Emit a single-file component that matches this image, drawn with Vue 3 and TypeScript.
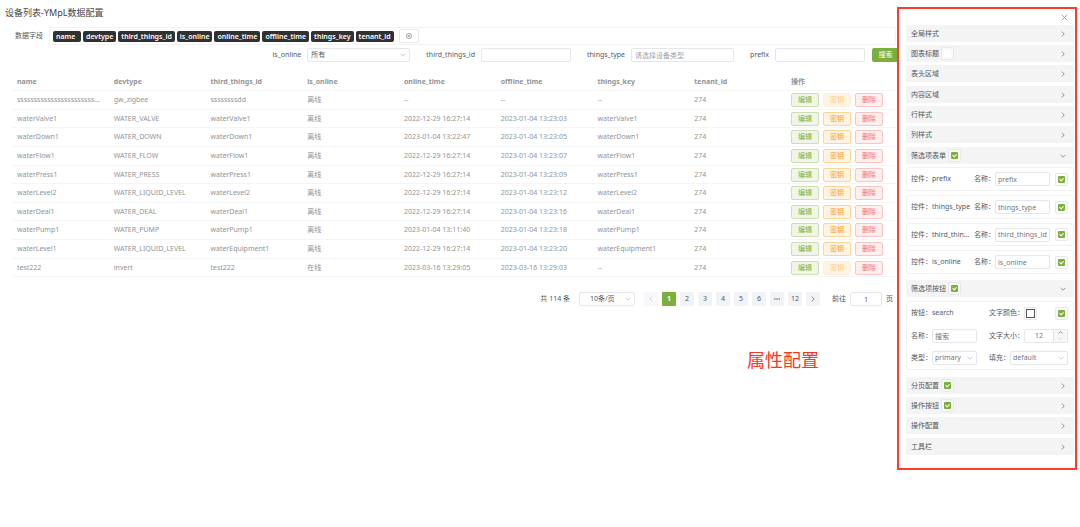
<script setup lang="ts">
import { reactive, ref } from 'vue'

interface Device {
  name: string
  devtype: string
  third: string
  online: string
  onlineTime: string
  offlineTime: string
  key: string
  tenant: string
}

const tags = ['name', 'devtype', 'third_things_id', 'is_online', 'online_time', 'offline_time', 'things_key', 'tenant_id']

const row = (name: string, devtype: string, third: string, onlineTime: string, offlineTime: string, key = third, online = '离线'): Device => ({
  name, devtype, third, online, onlineTime, offlineTime, key, tenant: '274',
})

const devices: Device[] = [
  row('ssssssssssssssssssssssssssssssss', 'gw_zigbee', 'ssssssssdd', '--', '--', '--'),
  row('waterValve1', 'WATER_VALVE', 'waterValve1', '2022-12-29 16:27:14', '2023-01-04 13:23:03'),
  row('waterDown1', 'WATER_DOWN', 'waterDown1', '2023-01-04 13:22:47', '2023-01-04 13:23:05'),
  row('waterFlow1', 'WATER_FLOW', 'waterFlow1', '2022-12-29 16:27:14', '2023-01-04 13:23:07'),
  row('waterPress1', 'WATER_PRESS', 'waterPress1', '2022-12-29 16:27:14', '2023-01-04 13:23:09'),
  row('waterLevel2', 'WATER_LIQUID_LEVEL', 'waterLevel2', '2022-12-29 16:27:14', '2023-01-04 13:23:12'),
  row('waterDeal1', 'WATER_DEAL', 'waterDeal1', '2022-12-29 16:27:14', '2023-01-04 13:23:16'),
  row('waterPump1', 'WATER_PUMP', 'waterPump1', '2023-01-04 13:11:40', '2023-01-04 13:23:18'),
  row('waterLevel1', 'WATER_LIQUID_LEVEL', 'waterEquipment1', '2022-12-29 16:27:14', '2023-01-04 13:23:20'),
  row('test222', 'invert', 'test222', '2023-03-16 13:29:05', '2023-03-16 13:29:03', '--', '在线'),
]

const firstPages = ['1', '2', '3', '4', '5', '6']
const currentPage = ref('1')

const topSections = reactive([
  { title: '全局样式' },
  { title: '图表标题', checked: false },
  { title: '表头区域' },
  { title: '内容区域' },
  { title: '行样式' },
  { title: '列样式' },
  { title: '筛选项表单', checked: true, open: true },
] as { title: string; checked?: boolean; open?: boolean }[])

const controls = reactive([
  { id: 'prefix', label: 'prefix', enabled: true },
  { id: 'things_type', label: 'things_type', enabled: true },
  { id: 'third_things_id', label: 'third_things_id', enabled: true },
  { id: 'is_online', label: 'is_online', enabled: true },
])

const bottomSections = reactive([
  { title: '分页配置', checked: true },
  { title: '操作按钮', checked: true },
  { title: '操作配置' },
  { title: '工具栏' },
] as { title: string; checked?: boolean }[])

const buttonSection = ref(true)
const searchEnabled = ref(true)
const fontSize = ref(12)
const buttonName = ref('搜索')
</script>

<template>
  <div class="page">
    <main class="main">
      <h1 class="title">设备列表-YMpL数据配置</h1>

      <div class="fields">
        <span class="fields-label">数据字段</span>
        <div class="tag-list">
          <span v-for="t in tags" :key="t" class="tag">{{ t }}</span>
          <button class="add" type="button" aria-label="字段设置">
            <svg viewBox="0 0 14 14"><circle cx="7" cy="7" r="6" /><circle cx="7" cy="7" r="2" /></svg>
          </button>
        </div>
      </div>

      <form class="filters" @submit.prevent>
        <label class="field">
          <span>is_online</span>
          <span class="select wide">
            <select><option>所有</option></select>
            <svg viewBox="0 0 10 10"><path d="M1 3l4 4 4-4" /></svg>
          </span>
        </label>
        <label class="field"><span>third_things_id</span><input class="box" type="text" /></label>
        <label class="field"><span>things_type</span><input class="box wide" type="text" placeholder="请选择设备类型" /></label>
        <label class="field"><span>prefix</span><input class="box" type="text" /></label>
        <button class="search" type="submit">搜索</button>
      </form>

      <table class="table">
        <colgroup><col v-for="n in 8" :key="n" /><col class="ops-col" /></colgroup>
        <thead>
          <tr>
            <th v-for="t in tags" :key="t">{{ t }}</th>
            <th>操作</th>
          </tr>
        </thead>
        <tbody>
          <tr v-for="d in devices" :key="d.name">
            <td>{{ d.name }}</td>
            <td>{{ d.devtype }}</td>
            <td>{{ d.third }}</td>
            <td>{{ d.online }}</td>
            <td>{{ d.onlineTime }}</td>
            <td>{{ d.offlineTime }}</td>
            <td>{{ d.key }}</td>
            <td>{{ d.tenant }}</td>
            <td>
              <div class="ops">
                <button type="button" class="op edit">编辑</button>
                <button type="button" class="op secret" :disabled="d.key === '--'">密钥</button>
                <button type="button" class="op remove">删除</button>
              </div>
            </td>
          </tr>
        </tbody>
      </table>

      <nav class="pager">
        <span class="total">共 114 条</span>
        <span class="select size">
          <select aria-label="每页条数"><option>10条/页</option></select>
          <svg viewBox="0 0 10 10"><path d="M1 3l4 4 4-4" /></svg>
        </span>
        <div class="pages">
          <button type="button" disabled aria-label="上一页"><svg viewBox="0 0 10 10"><path d="M7 1L3 5l4 4" /></svg></button>
          <button
            v-for="p in firstPages"
            :key="p"
            type="button"
            :class="{ active: p === currentPage }"
            @click="currentPage = p"
          >{{ p }}</button>
          <button type="button" aria-label="更多页">
            <svg class="dots" viewBox="0 0 14 14"><circle cx="2" cy="7" r="1.6" /><circle cx="7" cy="7" r="1.6" /><circle cx="12" cy="7" r="1.6" /></svg>
          </button>
          <button type="button" :class="{ active: currentPage === '12' }" @click="currentPage = '12'">12</button>
          <button type="button" aria-label="下一页"><svg viewBox="0 0 10 10"><path d="M3 1l4 4-4 4" /></svg></button>
        </div>
        <label class="jump"><span>前往</span><input type="text" value="1" /><span>页</span></label>
      </nav>

      <p class="note">属性配置</p>
    </main>

    <aside class="panel">
      <div class="panel-top">
        <button class="close" type="button" aria-label="关闭"><svg viewBox="0 0 10 10"><path d="M1 1l8 8M9 1L1 9" /></svg></button>
      </div>

      <div class="sections">
        <div v-for="s in topSections" :key="s.title" class="bar">
          <span>{{ s.title }}</span>
          <label v-if="s.checked !== undefined" class="tick"><input v-model="s.checked" type="checkbox" :aria-label="s.title" /></label>
          <svg class="arrow" viewBox="0 0 10 10"><path :d="s.open ? 'M1 3l4 4 4-4' : 'M3 1l4 4-4 4'" /></svg>
        </div>
      </div>

      <div class="cards">
        <div v-for="c in controls" :key="c.id" class="card control">
          <span class="key">控件：</span>
          <span class="value">{{ c.id }}</span>
          <label class="named"><span class="key">名称：</span><input v-model="c.label" class="text" type="text" /></label>
          <label class="tick"><input v-model="c.enabled" type="checkbox" :aria-label="c.id" /></label>
        </div>
      </div>

      <div class="bar">
        <span>筛选项按钮</span>
        <label class="tick"><input v-model="buttonSection" type="checkbox" aria-label="筛选项按钮" /></label>
        <svg class="arrow" viewBox="0 0 10 10"><path d="M1 3l4 4 4-4" /></svg>
      </div>

      <div class="card settings">
        <div class="pair"><span class="key">按钮：</span><span>search</span></div>
        <div class="pair">
          <span class="key">文字颜色：</span>
          <button class="swatch" type="button" aria-label="文字颜色"><i></i></button>
          <label class="tick end"><input v-model="searchEnabled" type="checkbox" aria-label="search" /></label>
        </div>

        <label class="pair"><span class="key">名称：</span><input v-model="buttonName" class="text" type="text" /></label>
        <div class="pair">
          <label class="key" for="font-size">文字大小：</label>
          <div class="stepper">
            <input id="font-size" v-model="fontSize" type="text" />
            <div class="steps">
              <button type="button" aria-label="增加" @click="fontSize++"><svg viewBox="0 0 10 10"><path d="M1 7l4-4 4 4" /></svg></button>
              <button type="button" class="faded" aria-label="减少" @click="fontSize--"><svg viewBox="0 0 10 10"><path d="M1 3l4 4 4-4" /></svg></button>
            </div>
          </div>
        </div>

        <label class="pair">
          <span class="key">类型：</span>
          <span class="select grow">
            <select><option>primary</option></select>
            <svg viewBox="0 0 10 10"><path d="M1 3l4 4 4-4" /></svg>
          </span>
        </label>
        <label class="pair">
          <span class="key">填充：</span>
          <span class="select grow">
            <select><option>default</option></select>
            <svg viewBox="0 0 10 10"><path d="M1 3l4 4 4-4" /></svg>
          </span>
        </label>
      </div>

      <div class="sections">
        <div v-for="s in bottomSections" :key="s.title" class="bar">
          <span>{{ s.title }}</span>
          <label v-if="s.checked !== undefined" class="tick"><input v-model="s.checked" type="checkbox" :aria-label="s.title" /></label>
          <svg class="arrow" viewBox="0 0 10 10"><path d="M3 1l4 4-4 4" /></svg>
        </div>
      </div>
    </aside>
  </div>
</template>

<style>
body {
  margin: 0;
  background: #fff;
}
</style>

<style scoped>
.page {
  display: flex;
  align-items: flex-start;
  font: 7px/10px "Noto Sans", "Noto Sans CJK SC", sans-serif;
  color: #55585e;
}
.page *,
.page *::after {
  box-sizing: border-box;
}
button,
input,
select {
  margin: 0;
  padding: 0;
  font: inherit;
  color: inherit;
  outline: none;
}
button {
  display: flex;
  align-items: center;
  justify-content: center;
  border: 0;
  background: none;
}
svg {
  display: block;
  width: 7px;
  height: 7px;
  fill: none;
  stroke: currentColor;
  stroke-width: 1.2;
}

/* main column */
.main {
  flex: 1;
  min-width: 0;
  overflow: hidden;
}
.title {
  margin: 0;
  padding: 6px 0 7px 5px;
  font-size: 9px;
  line-height: 14px;
  font-weight: 400;
  color: #444;
}
.fields {
  display: flex;
  align-items: center;
  height: 18px;
  margin-right: 1px;
}
.fields-label {
  flex: none;
  width: 49px;
  padding-left: 15px;
}
.tag-list {
  flex: 1;
  display: flex;
  align-items: center;
  gap: 2px;
  height: 18px;
  padding-left: 3px;
  border: 1px solid #f3f3f4;
}
.tag {
  min-width: 28px;
  padding: 0 3px;
  border-radius: 2px;
  background: #303133;
  color: #fff;
  font-weight: 600;
  line-height: 11px;
}
.add {
  width: 20px;
  height: 14px;
  margin-left: 3px;
  border: 1px solid #e8eaee;
  border-radius: 2px;
}
.add svg {
  width: 6px;
  height: 6px;
}

.filters {
  display: flex;
  align-items: center;
  justify-content: flex-end;
  margin-top: 3px;
}
.field {
  display: flex;
  align-items: center;
  gap: 6px;
}
.field + .field {
  margin-left: 16px;
}
.box,
.select select,
.text,
.jump input,
.stepper {
  height: 14px;
  border: 1px solid #e4e6eb;
  border-radius: 2px;
  background: #fff;
}
.box {
  width: 90px;
  padding: 0 3px;
}
.wide {
  width: 103px;
}
.box::placeholder {
  color: #a0a3a9;
}
.select {
  position: relative;
  display: block;
}
.select select {
  display: block;
  width: 100%;
  padding: 0 14px 0 3px;
  appearance: none;
}
.select svg {
  position: absolute;
  top: 4px;
  right: 4px;
  width: 6px;
  height: 6px;
  color: #b4b8c0;
  pointer-events: none;
}
.search {
  width: 25px;
  height: 14px;
  margin-left: 7px;
  padding-left: 2px;
  border-radius: 2px 0 0 2px;
  background: #7cb03c;
  color: #fff;
}

.table {
  width: calc(100% - 12px);
  margin: 11px 0 0 12px;
  border-collapse: separate;
  border-spacing: 0;
  table-layout: fixed;
  color: #909399;
}
.ops-col {
  width: 111px;
}
th,
td {
  height: 19px;
  padding: 0 0 0 5px;
  overflow: hidden;
  border-bottom: 1px solid #f4f5f7;
  text-align: left;
  text-overflow: ellipsis;
  white-space: nowrap;
}
td:first-child {
  padding-right: 7px;
}
th {
  height: 18px;
  font-weight: 700;
}
tr:nth-child(5n + 2) td,
tr:nth-child(5n) td {
  height: 18px;
}
.ops {
  display: flex;
  gap: 4px;
}
.op {
  width: 28px;
  height: 14px;
  border: 1px solid;
  border-radius: 2px;
}
.edit {
  background: #eff6e8;
  border-color: #cbdfb1;
  color: #7cb03c;
}
.secret {
  background: #fff3e3;
  border-color: #ffd596;
  color: #ff9a1f;
}
.secret:disabled {
  border-color: #fff0dc;
  color: #ffcb8b;
}
.remove {
  background: #feeeee;
  border-color: #fbc4c4;
  color: #f56c6c;
}

.pager {
  display: flex;
  align-items: center;
  justify-content: flex-end;
  margin-top: 15px;
  padding-right: 4px;
}
.size {
  width: 56px;
  margin: 0 9px;
}
.size select {
  padding-left: 10px;
}
.pages {
  display: flex;
  gap: 4px;
}
.pages button {
  width: 14px;
  height: 14px;
  border-radius: 1px;
  background: #f2f3f6;
}
.pages svg {
  width: 6px;
  height: 6px;
}
.pages .dots {
  fill: currentColor;
  stroke: none;
}
.pages button:disabled {
  background: #f7f8fa;
  color: #c0c4cc;
}
.pages .active {
  background: #7cb03c;
  color: #fff;
  font-weight: 700;
}
.jump {
  display: flex;
  align-items: center;
  gap: 4px;
  margin-left: 12px;
}
.jump input {
  width: 32px;
  text-align: center;
}
.note {
  margin: 41px 78px 0 0;
  color: #ff3322;
  font-size: 18px;
  line-height: 26px;
  text-align: right;
}

/* settings panel */
.panel {
  flex: none;
  width: 180px;
  margin: 7px 3px 0 0;
  padding: 0 1px 10px 7px;
  box-sizing: border-box;
  border: 2px solid #ff3b30;
}
.panel-top {
  display: flex;
  justify-content: flex-end;
  height: 16px;
  padding: 5px 6px 0 0;
}
.close {
  width: 7px;
  height: 7px;
  color: #909399;
}
.bar {
  display: flex;
  align-items: center;
  height: 17px;
  padding: 0 8px 0 5px;
  background: #f4f4f4;
}
.sections .bar {
  margin-bottom: 3px;
}
.sections .bar:nth-child(3n) {
  margin-bottom: 4px;
}
.arrow {
  width: 6px;
  height: 6px;
  margin-left: auto;
  color: #6b6e74;
}
.tick {
  display: flex;
  align-items: center;
  justify-content: center;
  width: 13px;
  height: 13px;
  border: 1px solid #e6e8ed;
  border-radius: 2px;
}
.bar .tick {
  margin-left: 2px;
  background: #f9f9fa;
}
.tick input {
  position: relative;
  width: 7px;
  height: 7px;
  border-radius: 1px;
  background: #fff;
  appearance: none;
}
.tick input:checked {
  background: #7cb03c;
}
.tick input:checked::after {
  content: "";
  position: absolute;
  left: 2px;
  top: 1px;
  width: 3px;
  height: 4px;
  border: solid #fff;
  border-width: 0 1px 1px 0;
  transform: rotate(45deg);
}
.card {
  border: 1px solid #f0f1f3;
  border-radius: 3px;
}
.cards {
  display: flex;
  flex-direction: column;
  gap: 4px;
  padding-bottom: 6px;
}
.control {
  display: flex;
  align-items: center;
  height: 24px;
  padding: 0 5px 0 4px;
}
.control:nth-child(3) {
  height: 23px;
}
.key {
  flex: none;
  white-space: nowrap;
}
.value {
  width: 40px;
  margin-right: 2px;
  overflow: hidden;
  text-overflow: ellipsis;
  white-space: nowrap;
}
.named {
  flex: 1;
  display: flex;
  align-items: center;
  margin-right: 5px;
}
.text,
.stepper input,
.grow select {
  flex: 1;
  min-width: 0;
  width: 100%;
  padding-left: 2px;
  color: #74777d;
}
.settings {
  display: grid;
  grid-template-columns: 66px 79px;
  justify-content: space-between;
  align-content: space-between;
  height: 69px;
  margin: 4px 0 7px;
  padding: 4px 5px 4px 4px;
}
.pair {
  display: flex;
  align-items: center;
  height: 14px;
}
.swatch {
  width: 13px;
  height: 13px;
  border: 1px solid #e6e8ed;
  border-radius: 2px;
}
.swatch i {
  flex: none;
  width: 9px;
  height: 9px;
  border: 1px solid #555;
  background: #fff;
}
.end {
  margin-left: auto;
}
.stepper {
  flex: 1;
  display: flex;
  min-width: 0;
}
.stepper input {
  padding: 0;
  border: 0;
  background: none;
  text-align: center;
}
.steps {
  display: flex;
  flex-direction: column;
  flex: none;
  width: 14px;
  border-left: 1px solid #e4e6eb;
  background: #f6f7f9;
}
.steps button {
  flex: 1;
  min-height: 0;
}
.steps svg {
  width: 5px;
  height: 5px;
}
.faded {
  color: #c0c4cc;
}
.grow {
  flex: 1;
  min-width: 0;
}
</style>
